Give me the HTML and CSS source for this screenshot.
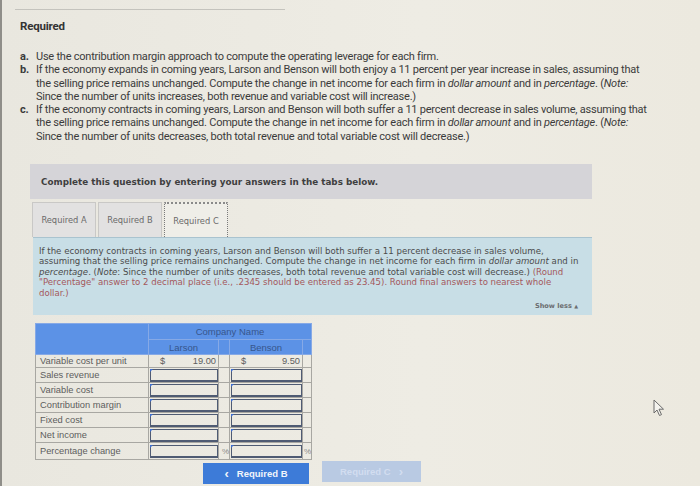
FILE: index.html
```html
<!DOCTYPE html>
<html>
<head>
<meta charset="utf-8">
<link rel="stylesheet" href="styles.css">
</head>
<body>
<div class="page">
  <div class="rule"></div>
  <h2 class="req-title">Required</h2>
  <ol class="qlist">
    <li><span class="mk">a.</span>Use the contribution margin approach to compute the operating leverage for each firm.</li>
    <li><span class="mk">b.</span>If the economy expands in coming years, Larson and Benson will both enjoy a 11 percent per year increase in sales, assuming that<br>the selling price remains unchanged. Compute the change in net income for each firm in <i>dollar amount</i> and in <i>percentage</i>. (<i>Note:</i><br>Since the number of units increases, both revenue and variable cost will increase.)</li>
    <li><span class="mk">c.</span>If the economy contracts in coming years, Larson and Benson will both suffer a 11 percent decrease in sales volume, assuming that<br>the selling price remains unchanged. Compute the change in net income for each firm in <i>dollar amount</i> and in <i>percentage</i>. (<i>Note:</i><br>Since the number of units decreases, both total revenue and total variable cost will decrease.)</li>
  </ol>

  <div class="qbox">Complete this question by entering your answers in the tabs below.</div>

  <div class="tabs">
    <div class="tab">Required A</div>
    <div class="tab">Required B</div>
    <div class="tab active">Required C</div>
  </div>

  <div class="info">
    <p>If the economy contracts in coming years, Larson and Benson will both suffer a 11 percent decrease in sales volume,<br>assuming that the selling price remains unchanged. Compute the change in net income for each firm in <i>dollar amount</i> and in<br><i>percentage</i>. (<i>Note</i>: Since the number of units decreases, both total revenue and total variable cost will decrease.) <span class="red">(Round<br>"Percentage" answer to 2 decimal place (i.e., .2345 should be entered as 23.45). Round final answers to nearest whole<br>dollar.)</span></p>
    <div class="showless">Show less <span class="tri">&#9650;</span></div>
  </div>

  <table class="grid">
    <colgroup>
      <col class="c-label"><col class="c-val"><col class="c-gap"><col class="c-val2"><col class="c-gap2">
    </colgroup>
    <tr class="h1">
      <th rowspan="2"></th>
      <th colspan="4">Company Name</th>
    </tr>
    <tr class="h2">
      <th>Larson</th><th></th><th>Benson</th><th></th>
    </tr>
    <tr class="r0">
      <td class="lbl">Variable cost per unit</td>
      <td><div class="money"><span>$</span><span>19.00</span></div></td>
      <td></td>
      <td><div class="money"><span>$</span><span>9.50</span></div></td>
      <td></td>
    </tr>
    <tr class="ri">
      <td class="lbl">Sales revenue</td>
      <td class="in"><div class="box"></div></td><td></td>
      <td class="in"><div class="box"></div></td><td></td>
    </tr>
    <tr class="ri">
      <td class="lbl">Variable cost</td>
      <td class="in"><div class="box"></div></td><td></td>
      <td class="in"><div class="box"></div></td><td></td>
    </tr>
    <tr class="ri">
      <td class="lbl">Contribution margin</td>
      <td class="in"><div class="box"></div></td><td></td>
      <td class="in"><div class="box"></div></td><td></td>
    </tr>
    <tr class="ri">
      <td class="lbl">Fixed cost</td>
      <td class="in"><div class="box"></div></td><td></td>
      <td class="in"><div class="box"></div></td><td></td>
    </tr>
    <tr class="ri">
      <td class="lbl">Net income</td>
      <td class="in"><div class="box"></div></td><td></td>
      <td class="in"><div class="box"></div></td><td></td>
    </tr>
    <tr class="ri last">
      <td class="lbl">Percentage change</td>
      <td class="in"><div class="box"></div></td><td class="pct">%</td>
      <td class="in"><div class="box"></div></td><td class="pct">%</td>
    </tr>
  </table>

  <div class="navrow">
    <div class="btn prev"><span class="chev">&lsaquo;</span> Required B</div>
    <div class="btn next">Required C <span class="chev">&rsaquo;</span></div>
  </div>

  <svg class="cursor" width="12" height="18" viewBox="0 0 12 18">
    <path d="M1 1 L1 14 L4 11 L6.5 16.5 L8.5 15.6 L6 10.2 L10.5 10.2 Z" fill="#f4f3ee" stroke="#6b6b6b" stroke-width="1"/>
  </svg>
</div>
</body>
</html>
```

FILE: styles.css
```css
* { box-sizing: border-box; }
html, body { margin: 0; padding: 0; }
body {
  background: #eceae1;
  width: 700px;
  height: 486px;
  overflow: hidden;
}
.page {
  position: relative;
  height: 486px;
  border-left: 2px solid #8f8e89;
  padding-top: 9px;
  background: linear-gradient(90deg, #e9e7df 0%, #eeece4 60%, #ece9df 100%);
}
.rule {
  margin-left: 13px;
  width: 270px;
  height: 1px;
  background: #c4c3bd;
}
.req-title {
  margin: 9px 0 0 18px;
  font-family: Roboto, "Liberation Sans", sans-serif;
  font-size: 11.5px;
  line-height: 14px;
  font-weight: bold;
  letter-spacing: -0.2px;
  color: #333;
}
.qlist {
  list-style: none;
  margin: 17px 0 0 0;
  padding: 0 0 0 34px;
  font-family: Roboto, "Liberation Sans", sans-serif;
  font-size: 11px;
  line-height: 13.3px;
  letter-spacing: -0.23px;
  color: #3b3b3b;
  white-space: nowrap;
}
.qlist li { position: relative; }
.qlist .mk {
  position: absolute;
  left: -16px;
  font-weight: bold;
}
.qbox {
  margin: 21px 0 0 28px;
  width: 562px;
  height: 35px;
  padding-left: 11px;
  display: flex;
  align-items: center;
  background: #d5d4d8;
  font-family: "DejaVu Sans", Verdana, sans-serif;
  font-size: 8.8px;
  font-weight: bold;
  color: #3f3f3f;
}
.tabs {
  display: flex;
  margin: 3px 0 0 30px;
  height: 35px;
  font-family: "DejaVu Sans", Verdana, sans-serif;
  font-size: 8.3px;
  color: #6a6a6a;
}
.tab {
  width: 64px;
  margin-right: 2px;
  display: flex;
  align-items: center;
  justify-content: center;
  background: #e2e1e1;
  border: 1px solid #c9c8c6;
  border-bottom: none;
}
.tab.active {
  width: 64px;
  background: #efeee8;
  border: 1px dotted #7a7a7a;
  border-bottom: none;
  border-top: 2px dotted #8a8a8a;
}
.info {
  margin-left: 31px;
  width: 559px;
  height: 78px;
  background: #c8dee6;
  border-top: 1px solid #a9c3cf;
  padding: 8px 14px 0 6px;
  font-family: "DejaVu Sans", Verdana, sans-serif;
  font-size: 8.6px;
  line-height: 10.4px;
  color: #4b4b4b;
  white-space: nowrap;
}
.info p { margin: 0; }
.info .red { color: #a4585c; }
.showless {
  margin-top: 3px;
  text-align: right;
  font-size: 6.6px;
  font-weight: bold;
  color: #6b6d70;
}
.showless .tri { font-size: 5px; }
.grid {
  margin: 8px 0 0 33px;
  border-collapse: collapse;
  table-layout: fixed;
  width: 276px;
  font-family: "Liberation Sans", Arial, sans-serif;
  font-size: 9.3px;
  color: #5d5d5d;
}
.c-label { width: 113px; }
.c-val { width: 70px; }
.c-gap { width: 11px; }
.c-val2 { width: 73px; }
.c-gap2 { width: 9px; }
.grid th {
  background: #5c92e6;
  border: 1px solid #86a9e6;
  font-weight: normal;
  color: #37568c;
  font-size: 9.5px;
  padding: 0;
}
.grid tr.h1 th { height: 16px; }
.grid tr.h2 th { height: 15px; }
.grid td {
  border: 1px solid #a8a7a2;
  padding: 0;
}
.grid tr.r0 td { height: 13px; }
.grid tr.ri td { height: 15px; }
.grid tr.last td { height: 17px; }
.grid td.lbl { padding-left: 4px; white-space: nowrap; }
.money {
  display: flex;
  justify-content: space-between;
  padding: 0 2px 0 11px;
}
.grid td.in { padding: 1px 0 0 1px; }
.box {
  position: relative;
  height: 13px;
  border: 1px solid #4f5b73;
  border-bottom-width: 2px;
}
.box::before {
  content: "";
  position: absolute;
  left: -1px;
  top: -1px;
  border-top: 3px solid #3f6fd0;
  border-right: 3px solid transparent;
}
.grid td.pct {
  font-size: 8px;
  color: #8a8a8a;
  text-align: right;
  padding-right: 0;
}
.navrow {
  display: flex;
  margin: 3px 0 0 201px;
  gap: 13px;
  font-family: "Liberation Sans", Arial, sans-serif;
  font-size: 9.5px;
  font-weight: bold;
}
.btn {
  height: 21px;
  display: flex;
  align-items: center;
  justify-content: center;
}
.btn.prev {
  width: 106px;
  background: #3d7bd8;
  color: #f2f5fb;
}
.btn.next {
  width: 99px;
  margin-top: -2px;
  background: #b9cae3;
  color: #d2ddf0;
}
.chev {
  font-size: 13px;
  margin-right: 8px;
  line-height: 1;
}
.btn.next .chev { margin: 0 0 0 8px; }
.cursor {
  position: absolute;
  left: 651px;
  top: 399px;
}
```
